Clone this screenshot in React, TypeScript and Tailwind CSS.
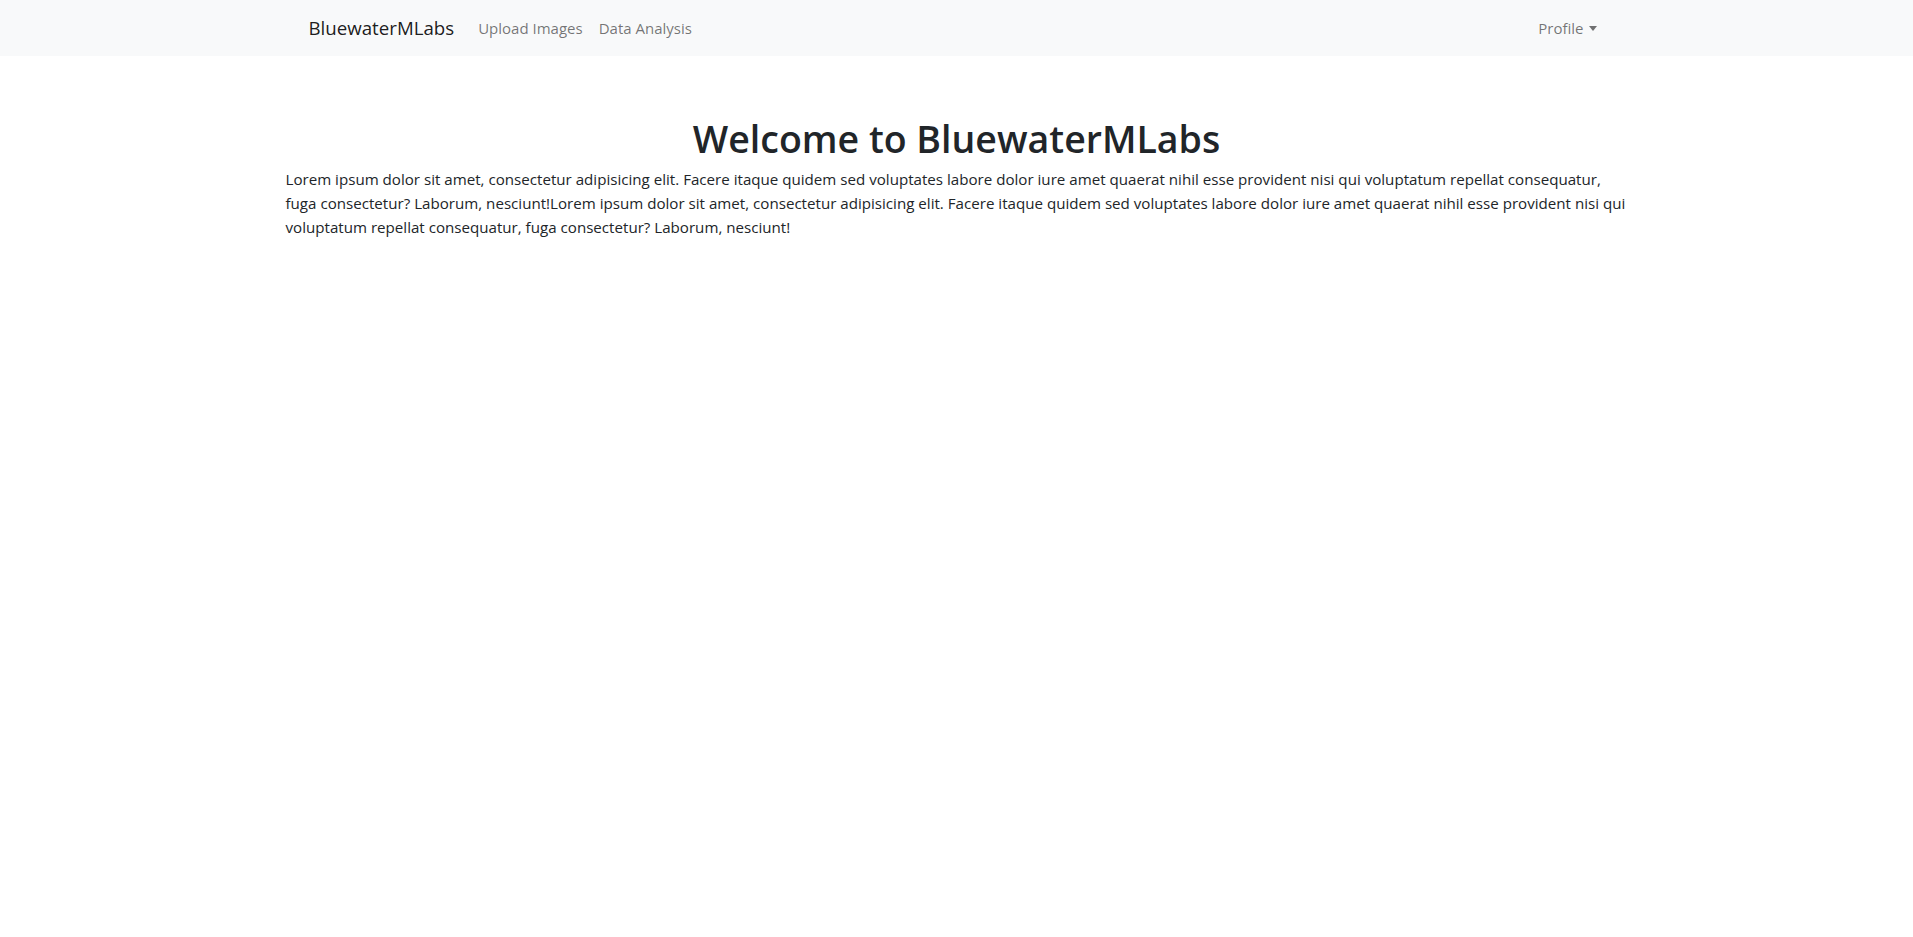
const TEXT =
  'Lorem ipsum dolor sit amet, consectetur adipisicing elit. Facere itaque quidem sed voluptates labore dolor iure amet quaerat nihil esse provident nisi qui voluptatum repellat consequatur, fuga consectetur? Laborum, nesciunt!';

export default function App() {
  return (
    <div className="min-h-[937px] bg-white text-[#212529] font-['Segoe_UI','Open_Sans',sans-serif]">
      {/* Navbar */}
      <nav className="bg-[#f8f9fa] h-14">
        <div className="max-w-[1320px] mx-auto px-3 h-full flex items-center">
          <a href="#" className="text-[18.7px] text-black/90 mr-4">BluewaterMLabs</a>
          <ul className="flex items-center text-[15px] text-black/55">
            <li><a href="#" className="block px-2 py-2">Upload Images</a></li>
            <li><a href="#" className="block px-2 py-2">Data Analysis</a></li>
          </ul>
          <div className="ml-auto text-[15px] text-black/55">
            <a href="#" className="flex items-center px-2 py-2">
              Profile
              <span className="ml-[5px] w-0 h-0 border-l-[4px] border-r-[4px] border-t-[5px] border-l-transparent border-r-transparent border-t-black/55" />
            </a>
          </div>
        </div>
      </nav>

      {/* Main */}
      <main className="max-w-[1342px] mx-auto pt-[59px]">
        <h1 className="text-center text-[37.5px] leading-[48px] font-semibold mb-1">Welcome to BluewaterMLabs</h1>
        <p className="text-[15.13px] leading-6">
          {TEXT}
          {TEXT}
        </p>
      </main>
    </div>
  );
}
